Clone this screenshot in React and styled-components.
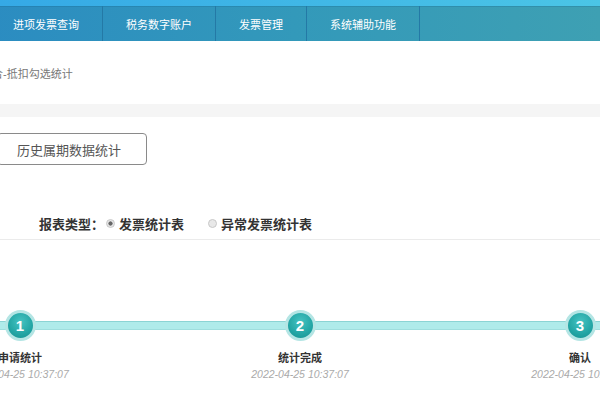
import React from 'react';
import styled, { createGlobalStyle } from 'styled-components';

const GlobalStyle = createGlobalStyle`
	html, body {
		margin: 0;
		padding: 0;
		background: #fff;
		overflow: hidden;
	}
	body {
		font-family: "Liberation Sans", "Noto Sans CJK SC", sans-serif;
	}
`;

const Page = styled.div`
	width: 600px;
	height: 400px;
	overflow: hidden;
	background: #fff;
`;

const TopStrip = styled.div`
	height: 6px;
	background: linear-gradient(90deg, #35a9e6 0%, #4bc5e6 100%);
`;

const Nav = styled.nav`
	display: flex;
	height: 35px;
	margin-left: -10px;
	padding-left: 10px;
	background: linear-gradient(90deg, #2b8cc1 0%, #3399ba 50%, #3ea0b3 100%);
	box-shadow: inset 0 1px 0 rgba(20, 100, 140, 0.25);
`;

const NavItem = styled.div`
	display: flex;
	align-items: center;
	padding: 0 23px;
	font-size: 11px;
	color: #fff;
	border-right: 1px solid #2479a6;
	white-space: nowrap;

	&:first-child {
		margin-left: -10px;
	}
`;

const Crumb = styled.div`
	height: 63px;
	padding-top: 24px;
	box-sizing: border-box;
	margin-left: -8px;
	font-size: 11px;
	color: #777;
	white-space: nowrap;
`;

const GreyBand = styled.div`
	height: 13px;
	background: #f5f5f5;
`;

const ButtonRow = styled.div`
	padding-top: 16px;
	margin-left: -3px;
`;

const HistoryButton = styled.button`
	width: 150px;
	height: 32px;
	border: 1px solid #8a8a8a;
	border-radius: 4px;
	background: #fff;
	font-family: "Liberation Sans", "Noto Sans CJK SC", sans-serif;
	font-size: 13px;
	color: #555;
	padding: 0 6px 0 0;
`;

const TypeRow = styled.div`
	display: flex;
	align-items: center;
	height: 30px;
	margin-top: 43px;
	padding-left: 39px;
	border-bottom: 1px solid #ebebeb;
	padding-bottom: 1px;
	font-size: 13px;
	font-weight: bold;
	color: #333;
`;

const TypeLabel = styled.span`
	margin-right: 2px;
`;

const Radio = styled.span`
	display: inline-block;
	box-sizing: border-box;
	width: 9px;
	height: 9px;
	border-radius: 50%;
	border: 1px solid #c8c8c8;
	background: ${p => (p.checked ? 'radial-gradient(circle, #666 0 1.8px, #e6e6e6 2.4px)' : '#e8e8e8')};
	margin-right: 4px;
`;

const RadioText = styled.span`
	margin-right: 24px;
`;

const Steps = styled.div`
	position: relative;
	display: flex;
	justify-content: space-between;
	margin: 70px -40px 0;
`;

const Track = styled.div`
	position: absolute;
	left: 0;
	right: 0;
	top: 11px;
	height: 7px;
	background: #afebea;
	border-top: 1px solid #8bd4d4;
	border-bottom: 1px solid #9fdede;
`;

const Step = styled.div`
	position: relative;
	display: flex;
	flex-direction: column;
	align-items: center;
	width: 120px;
`;

const Circle = styled.div`
	display: flex;
	align-items: center;
	justify-content: center;
	box-sizing: border-box;
	width: 31px;
	height: 31px;
	border-radius: 50%;
	border: 3px solid #b4e5e4;
	background: radial-gradient(circle at 50% 35%, #46c3c2 0%, #22a5a4 60%, #178f8f 100%);
	color: #fff;
	font-family: "Liberation Sans", sans-serif;
	font-size: 15px;
	font-weight: bold;
`;

const StepName = styled.div`
	margin-top: 10px;
	font-size: 11px;
	font-weight: bold;
	color: #333;
	line-height: 14px;
`;

const StepTime = styled.div`
	margin-top: 2px;
	font-family: "Liberation Sans", sans-serif;
	font-size: 10.5px;
	font-style: italic;
	color: #aaa;
	line-height: 14px;
	white-space: nowrap;
`;

const navItems = ['进项发票查询', '税务数字账户', '发票管理', '系统辅助功能'];

const steps = [
	{ n: 1, name: '申请统计', time: '2022-04-25 10:37:07' },
	{ n: 2, name: '统计完成', time: '2022-04-25 10:37:07' },
	{ n: 3, name: '确认', time: '2022-04-25 10:37:07' }
];

export default function App() {
	return (
		<Page>
			<GlobalStyle />
			<TopStrip />
			<Nav>
				{navItems.map(item => (
					<NavItem key={item}>{item}</NavItem>
				))}
			</Nav>
			<Crumb>合-抵扣勾选统计</Crumb>
			<GreyBand />
			<ButtonRow>
				<HistoryButton>历史属期数据统计</HistoryButton>
			</ButtonRow>
			<TypeRow>
				<TypeLabel>报表类型：</TypeLabel>
				<Radio checked />
				<RadioText>发票统计表</RadioText>
				<Radio />
				<RadioText>异常发票统计表</RadioText>
			</TypeRow>
			<Steps>
				<Track />
				{steps.map(s => (
					<Step key={s.n}>
						<Circle>{s.n}</Circle>
						<StepName>{s.name}</StepName>
						<StepTime>{s.time}</StepTime>
					</Step>
				))}
			</Steps>
		</Page>
	);
}
